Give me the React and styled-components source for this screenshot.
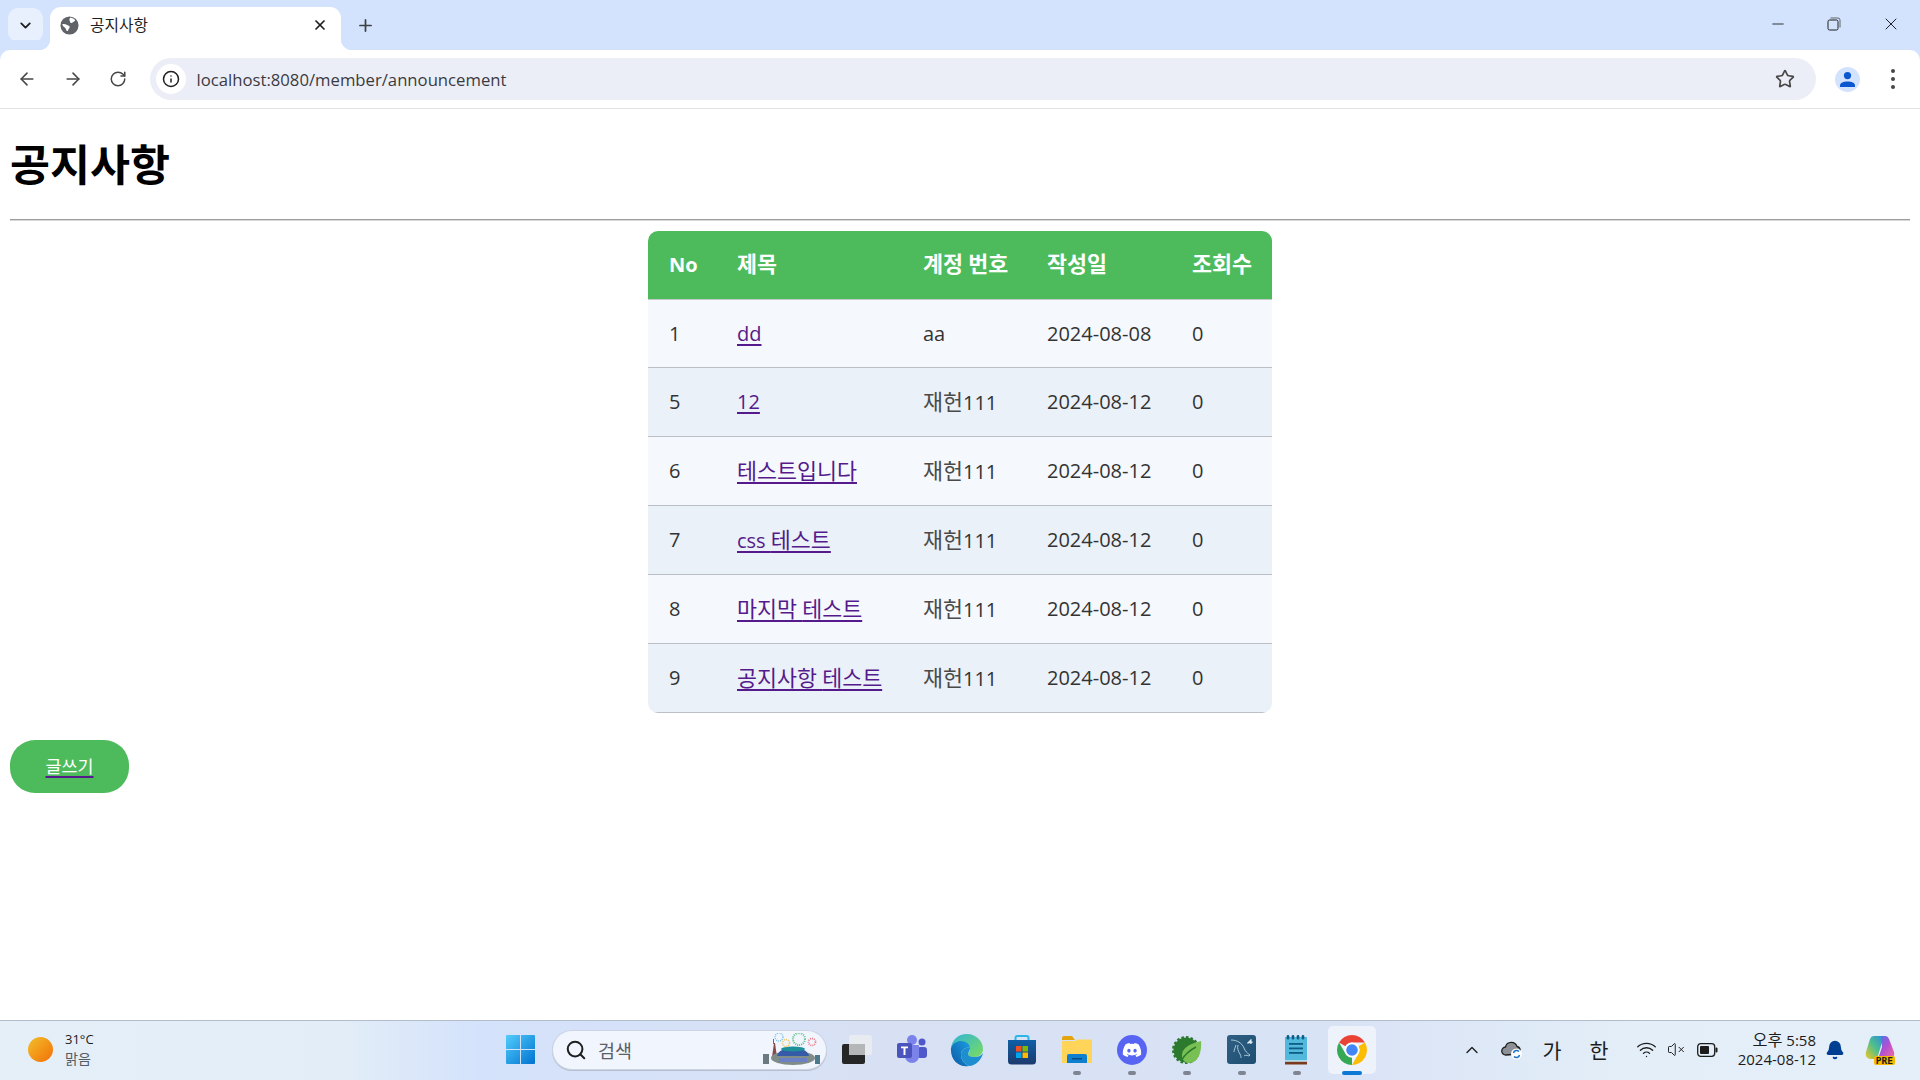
import React from 'react';
import styled, { createGlobalStyle } from 'styled-components';
import { ArrowLeft, ArrowRight, RotateCw, Info, Star, X, Plus, ChevronDown, Minus, Search, ChevronUp, Bell, Wifi, VolumeX } from 'lucide-react';
import { FaDiscord } from 'react-icons/fa';

const FONT = `"Open Sans", "Noto Sans CJK KR", sans-serif`;

const Global = createGlobalStyle`
  html, body { margin: 0; padding: 0; background: #fff; }
  body { font-family: ${FONT}; overflow: hidden; }
`;

const Shell = styled.div`
  display: flex;
  flex-direction: column;
  width: 1920px;
  height: 1080px;
  overflow: hidden;
`;

/* Hangul in the reference's font has a full-em advance, Noto's is .92em */
const Ko = styled.span`
  font-size: 1.087em;
`;

/* ---------- browser chrome ---------- */
const TabStrip = styled.div`
  display: flex;
  align-items: flex-end;
  height: 50px;
  flex: none;
  background: #d3e3fd;
  padding-left: 8px;
`;
const TabSearch = styled.button`
  display: flex;
  align-items: center;
  justify-content: center;
  width: 35px;
  height: 34px;
  margin: 0 7px 8px 0;
  padding: 0;
  border: 0;
  border-radius: 10px;
  background: #e8f0fe;
  color: #1f1f1f;
`;
const Tab = styled.div`
  position: relative;
  display: flex;
  align-items: center;
  width: 291px;
  height: 43px;
  box-sizing: border-box;
  padding: 0 13px 7px 10px;
  background: #fff;
  border-radius: 11px 11px 0 0;
  &::before, &::after {
    content: '';
    position: absolute;
    bottom: 0;
    width: 11px;
    height: 11px;
  }
  &::before { left: -11px; background: radial-gradient(circle at 0 0, transparent 11px, #fff 11.5px); }
  &::after { right: -11px; background: radial-gradient(circle at 100% 0, transparent 11px, #fff 11.5px); }
`;
const TabTitle = styled.span`
  flex: 1;
  margin-left: 11px;
  font-size: 14.5px;
  line-height: 20px;
  color: #1f1f1f;
`;
const NewTab = styled.div`
  display: flex;
  align-items: center;
  margin: 0 0 15px 15px;
  color: #3c4043;
`;
const WindowControls = styled.div`
  display: flex;
  margin: 0 0 16px auto;
  padding-right: 1px;
`;
const WindowButton = styled.div`
  display: flex;
  align-items: center;
  justify-content: center;
  width: 56.5px;
  height: 20px;
  color: #1f1f1f;
`;
const Toolbar = styled.div`
  display: flex;
  align-items: center;
  height: 59px;
  box-sizing: border-box;
  flex: none;
  background: #fff;
  border-bottom: 1px solid #e2e2e2;
  border-radius: 10px 10px 0 0;
  box-shadow: 0 -10px 0 #d3e3fd;
  padding: 0 25px 0 9px;
  color: #474747;
`;
const NavButton = styled.div`
  display: flex;
  align-items: center;
  justify-content: center;
  width: 36px;
  margin-right: 9.5px;
`;
const Omnibox = styled.div`
  display: flex;
  align-items: center;
  flex: 1;
  height: 42px;
  margin-left: 4px;
  padding: 0 21px 0 6px;
  border-radius: 21px;
  background: #ebeef7;
`;
const InfoChip = styled.div`
  display: flex;
  align-items: center;
  justify-content: center;
  width: 30px;
  height: 30px;
  border-radius: 50%;
  background: #fff;
  color: #1f1f1f;
`;
const UrlText = styled.span`
  flex: 1;
  margin-left: 11px;
  font-size: 16.7px;
  color: #3b3b3f;
`;
const Avatar = styled.div`
  display: flex;
  align-items: center;
  justify-content: center;
  width: 25px;
  height: 25px;
  margin-left: 19.5px;
  border-radius: 50%;
  background: #d3e3fd;
`;
const MenuDots = styled.div`
  display: flex;
  flex-direction: column;
  align-items: center;
  gap: 4px;
  margin-left: 31px;
  & > i { width: 4px; height: 4px; border-radius: 50%; background: #474747; display: block; }
`;

/* ---------- page ---------- */
const Page = styled.main`
  flex: 1;
  padding: 0 10px;
  background: #fff;
`;
const Title = styled.h1`
  height: 54px;
  margin: 29px 0 27px;
  font-size: 40px;
  line-height: 54px;
  font-weight: 700;
  color: #000;
`;
const Rule = styled.hr`
  height: 0;
  margin: 0 0 10px;
  border: 0;
  border-top: 1px solid #9d9d9d;
  border-bottom: 1px solid #d8d8d8;
`;
const TableWrap = styled.div`
  width: 624px;
  margin: 0 auto;
  border-radius: 10px;
  overflow: hidden;
`;
const Table = styled.table`
  width: 100%;
  table-layout: fixed;
  border-collapse: separate;
  border-spacing: 0;
  font-size: 20px;
`;
const Th = styled.th`
  height: 69px;
  padding: 0 0 2px 22px;
  box-sizing: border-box;
  text-align: left;
  font-weight: 700;
  line-height: 27px;
  color: #fff;
  background: #4dbb5c;
  border-bottom: 1px solid #c4cbc6;
  &:first-child { padding-left: 21px; }
`;
const Td = styled.td`
  height: 69px;
  padding: 0 0 1px 22px;
  box-sizing: border-box;
  line-height: 27px;
  color: #333;
  border-bottom: 1px solid #bcc0c6;
  &:first-child { padding-left: 21px; }
  & > ${Ko} { color: #4a4a4a; }
`;
const Tr = styled.tr`
  background: ${p => (p.$even ? '#eaf1f8' : '#f5f8fc')};
  &:first-child > ${Td} { height: 68px; }
`;
const PostLink = styled.a`
  color: #551a8b;
  text-decoration: underline;
  text-decoration-thickness: 2px;
  text-underline-offset: 3px;
`;
const WriteButton = styled.a`
  display: flex;
  align-items: center;
  justify-content: center;
  width: 119px;
  height: 53px;
  box-sizing: border-box;
  margin-top: 27px;
  padding-bottom: 2px;
  border-radius: 25px;
  background: #4dbb5c;
  font-size: 16px;
  font-weight: 400;
  color: #fff;
  text-decoration: underline #551a8b;
  text-decoration-thickness: 1.5px;
  text-underline-offset: 3px;
`;

/* ---------- taskbar ---------- */
const Taskbar = styled.footer`
  display: flex;
  align-items: center;
  height: 60px;
  box-sizing: border-box;
  flex: none;
  padding-bottom: 2px;
  border-top: 1px solid #b3bccb;
  background: linear-gradient(90deg, #e5eff8 0, #e2edf8 18%, #d4e2fb 25%, #d8e1f4 45%, #d9e3f6 70%, #e3eef8 85%, #e4eff9 100%);
`;
const Weather = styled.div`
  display: flex;
  align-items: center;
  flex: none;
  width: 506px;
  box-sizing: border-box;
  padding-left: 28px;
  gap: 12px;
`;
const Sun = styled.div`
  width: 25px;
  height: 25px;
  border-radius: 50%;
  background: linear-gradient(135deg, #f2c02c, #f36f06);
`;
const WeatherText = styled.div`
  display: flex;
  flex-direction: column;
  font-size: 13px;
  line-height: 19px;
  color: #1c1c1c;
  & > span + span { color: #555b62; }
`;
const SearchPill = styled.div`
  display: flex;
  align-items: center;
  flex: none;
  width: 273px;
  height: 38px;
  box-sizing: border-box;
  margin: 0 3px 0 18px;
  padding: 0 5px 0 12px;
  border-radius: 19px;
  background: #f1f5fd;
  box-shadow: 0 0 0 1px #cdd5e4, 0 1px 0 1px #b7bfce;
`;
const SearchText = styled.span`
  flex: 1;
  margin-left: 11px;
  font-size: 17px;
  color: #5b5f66;
`;
const AppSlot = styled.div`
  position: relative;
  display: flex;
  align-items: center;
  justify-content: center;
  flex: none;
  width: ${p => (p.$active ? '48px' : '55px')};
  height: 48px;
  margin: ${p => (p.$active ? '0 3.5px' : '0')};
  border-radius: 5px;
  background: ${p => (p.$active ? '#eef2fb' : 'transparent')};
  &::after {
    content: ${p => (p.$running ? "''" : 'none')};
    position: absolute;
    bottom: -1px;
    left: 50%;
    transform: translateX(-50%);
    width: ${p => (p.$active ? '20px' : '8px')};
    height: 4px;
    border-radius: 2px;
    background: ${p => (p.$active ? '#0a78d4' : '#7f8590')};
  }
`;
const Tray = styled.div`
  display: flex;
  align-items: center;
  margin-left: auto;
  padding-right: 14px;
  color: #1c1c1c;
`;
const TraySlot = styled.div`
  display: flex;
  align-items: center;
  justify-content: center;
  flex: none;
  width: ${p => p.$w}px;
  font-size: 19px;
`;
const Clock = styled.div`
  display: flex;
  flex-direction: column;
  align-items: flex-end;
  flex: none;
  width: 87px;
  font-size: 15px;
  line-height: 19px;
  white-space: nowrap;
`;
const CopilotBox = styled.div`
  position: relative;
  width: 30px;
  height: 30px;
`;
const PreBadge = styled.span`
  position: absolute;
  right: 0;
  bottom: 0;
  padding: 0 2px;
  border-radius: 2px;
  background: #f6b800;
  font-family: "DejaVu Sans Mono", monospace;
  font-size: 9.5px;
  font-weight: 700;
  line-height: 9px;
  color: #1c1c1c;
`;

/* ---------- drawings ---------- */
const GlobeIcon = () => (
  <svg width="19" height="19" viewBox="0 0 20 20">
    <circle cx="10" cy="10" r="9.5" fill="#5f6368" />
    <path d="M11 1.5c2 .4 4 1.4 5 3-.6 1.2-1.6 1.4-2.4 2.2-.7.8-1.8.9-2.6.3-.6-.5-.2-1.4-.8-2C9.700 4.400 9.600 2.600 11 1.500zM2.500 8.500c1.500-.3 3.300-.2 4.600.6 1.100.7 2.400 1 3 2 .4 1-.3 1.900-1 2.500-.5.700-.3 1.700-1.100 2.200-.6.300-1.300-.2-1.500-1-.4-1.100-.6-2.100-1.600-2.700-1.100-.7-2.200-1.600-2.400-3.600z" fill="#fff" />
  </svg>
);
const RestoreIcon = () => (
  <svg width="14" height="14" viewBox="0 0 14 14" fill="none" stroke="#1f1f1f" strokeWidth="1">
    <rect x="1" y="3" width="10" height="10" rx="1.600" />
    <path d="M3.500 1h7.500a2 2 0 0 1 2 2v7.500" stroke="#5f6368" />
  </svg>
);
const UserIcon = () => (
  <svg width="17" height="17" viewBox="0 0 17 17" fill="#0b57d0">
    <circle cx="8.500" cy="4.600" r="3.600" />
    <path d="M1 16v-1.500c0-2.600 3.500-4 7.500-4s7.500 1.400 7.500 4V16z" />
  </svg>
);
const WindowsIcon = () => (
  <svg width="29" height="29" viewBox="0 0 29 29" style={{ flex: 'none' }}>
    <defs>
      <linearGradient id="win" x1="0" y1="0" x2="1" y2="1">
        <stop offset="0" stopColor="#52cdfb" />
        <stop offset="1" stopColor="#0072d1" />
      </linearGradient>
    </defs>
    <path d="M1 0h13v14H0V1a1 1 0 0 1 1-1zM15 0h13a1 1 0 0 1 1 1v13H15zM0 15h14v14H1a1 1 0 0 1-1-1zM15 15h14v13a1 1 0 0 1-1 1H15z" fill="url(#win)" />
  </svg>
);
const SearchArt = () => (
  <svg width="58" height="34" viewBox="0 0 58 34" style={{ flex: 'none' }}>
    <rect x="0" y="21" width="6" height="10" fill="#6b7a80" />
    <rect x="52" y="22" width="5" height="9" fill="#4c7a8c" />
    <path d="M9 24l2-14h1l2 14z" fill="#8a4a4a" />
    <path d="M10.500 6v5" stroke="#b5523f" strokeWidth="1" />
    <ellipse cx="30" cy="25" rx="22" ry="7" fill="#7f8c88" />
    <path d="M14 23c1-6 9-8 16-8s15 2 16 8z" fill="#355aa8" />
    <path d="M16 25h28v4H16z" fill="#6a7fc4" />
    <ellipse cx="30" cy="16" rx="12" ry="2.500" fill="#1f8f9a" />
    <circle cx="16" cy="4" r="4" fill="none" stroke="#7cc0ea" strokeWidth="1.500" strokeDasharray="1 1" />
    <circle cx="23" cy="10" r="3.500" fill="none" stroke="#eec24e" strokeWidth="1.500" strokeDasharray="1 1" />
    <circle cx="36" cy="6" r="6" fill="none" stroke="#62c08d" strokeWidth="2" strokeDasharray="1 1" />
    <circle cx="49" cy="9" r="3.500" fill="none" stroke="#ec7d8b" strokeWidth="1.800" strokeDasharray="1 1" />
  </svg>
);
const TaskViewIcon = () => (
  <svg width="30" height="30" viewBox="0 0 30 30">
    <rect x="0" y="9" width="23" height="20" rx="2" fill="#262626" />
    <rect x="7" y="0" width="23" height="20" rx="2" fill="#e9ebee" opacity=".92" />
    <rect x="7" y="9" width="16" height="11" fill="#b5b6b8" />
  </svg>
);
const TeamsIcon = () => (
  <svg width="30" height="30" viewBox="0 0 30 30">
    <circle cx="25" cy="7" r="3.500" fill="#5059c9" />
    <rect x="20" y="12" width="10" height="11" rx="3" fill="#5059c9" />
    <circle cx="15" cy="5" r="5" fill="#7b83eb" />
    <path d="M8 10h14v11a7 7 0 0 1-14 0z" fill="#7b83eb" />
    <rect x="0" y="8" width="15" height="15" rx="2" fill="#4b53bc" />
    <path d="M4 11.500h7v1.800H8.500V20h-2v-6.700H4z" fill="#fff" />
  </svg>
);
const EdgeIcon = () => (
  <svg width="34" height="34" viewBox="0 0 34 34">
    <defs>
      <linearGradient id="edgeA" x1="0" y1="1" x2="1" y2="0">
        <stop offset="0" stopColor="#0c59a4" />
        <stop offset="1" stopColor="#1b9de2" />
      </linearGradient>
      <linearGradient id="edgeB" x1="0" y1="0" x2="1" y2="1">
        <stop offset="0" stopColor="#2fb5d8" />
        <stop offset="1" stopColor="#7bdc5e" />
      </linearGradient>
    </defs>
    <path d="M17 1C26 1 33 8 33 16c0 5-4 8-9 8-3 0-6-1-6-3 0-1 2-2 2-5 0-4-4-7-9-7-4 0-8 2-10 6C2 7 8 1 17 1z" fill="url(#edgeB)" />
    <path d="M1 15c2-5 6-7 10-7 5 0 9 3 9 7-4-1-9 1-9 7 0 5 4 9 8 11-10 2-19-6-18-18z" fill="url(#edgeA)" />
    <path d="M19 33c-4-2-8-6-8-11 0-6 5-8 9-7 0 3-2 4-2 6 0 2 3 3 6 3 4 0 7-1 9-4-1 6-7 13-14 13z" fill="#1d8fd0" />
  </svg>
);
const StoreIcon = () => (
  <svg width="30" height="30" viewBox="0 0 30 30">
    <defs>
      <linearGradient id="bag" x1="0" y1="0" x2="0" y2="1">
        <stop offset="0" stopColor="#0f5fa6" />
        <stop offset="1" stopColor="#1d3a6d" />
      </linearGradient>
    </defs>
    <path d="M8.500 7V3a2 2 0 0 1 2-2h9a2 2 0 0 1 2 2v4" fill="none" stroke="#29b6e8" strokeWidth="2" />
    <path d="M1 5h28v21a3.500 3.500 0 0 1-3.500 3.500h-21A3.500 3.500 0 0 1 1 26z" fill="url(#bag)" />
    <rect x="9" y="11" width="5.500" height="5.500" fill="#f25022" />
    <rect x="15.500" y="11" width="5.500" height="5.500" fill="#7fba00" />
    <rect x="9" y="17.500" width="5.500" height="5.500" fill="#00a4ef" />
    <rect x="15.500" y="17.500" width="5.500" height="5.500" fill="#ffb900" />
  </svg>
);
const FolderIcon = () => (
  <svg width="30" height="28" viewBox="0 0 30 28">
    <path d="M0 2a2 2 0 0 1 2-2h8l3 4h-13z" fill="#e3a50c" />
    <path d="M0 5h13l2-1.500h15V27H0z" fill="#ffd559" />
    <path d="M5 20a2 2 0 0 1 2-2h16a2 2 0 0 1 2 2v7H5z" fill="#0f7fd0" />
    <rect x="10" y="22" width="10" height="1.500" fill="#0a4d85" />
  </svg>
);
const DiscordDisc = styled.div`
  display: flex;
  align-items: center;
  justify-content: center;
  width: 30px;
  height: 30px;
  border-radius: 50%;
  background: #5865f2;
`;
const DiscordIcon = () => (
  <DiscordDisc><FaDiscord size={20} color="#fff" /></DiscordDisc>
);
const SpringIcon = () => (
  <svg width="30" height="30" viewBox="0 0 30 30">
    <circle cx="14" cy="15" r="12.500" fill="#2c7a2e" stroke="#2c7a2e" strokeWidth="3" strokeDasharray="2.500 2" />
    <path d="M10 22C9 14 16 9 29 6c1 9-2 22-12 22-3 0-6-2-7-6z" fill="#79c054" />
    <path d="M9 26c4-7 9-11 15-14" fill="none" stroke="#2c7a2e" strokeWidth="1.500" />
  </svg>
);
const MysqlIcon = () => (
  <svg width="29" height="29" viewBox="0 0 29 29">
    <defs>
      <linearGradient id="my" x1="0" y1="0" x2="1" y2="1">
        <stop offset="0" stopColor="#2f5f83" />
        <stop offset="1" stopColor="#1f4e73" />
      </linearGradient>
    </defs>
    <rect width="29" height="29" rx="3" fill="url(#my)" />
    <path d="M4 5c6 0 11 3 13 8 1 3 3 5 6 7l-1 1c-3-1-4-1-5 0M11 10c-1 3 0 6 2 9 1 2 1 3 1 4M9 10c-1 3-2 5-2 7" fill="none" stroke="#b8d2e2" strokeWidth=".9" />
    <path d="M20 8l4-4 1 1-1 1 2 1-2 2-2-1-1 1z" fill="#dfe9ef" />
  </svg>
);
const NotepadIcon = () => (
  <svg width="23" height="30" viewBox="0 0 23 30">
    <rect y="2" width="22" height="27" fill="#52b9dc" />
    <rect y="26.500" width="22" height="3" fill="#7b3a1d" />
    <rect y="25.500" width="22" height="1" fill="#fff" />
    {[3, 8, 13, 18].map(x => <rect key={x} x={x - 1.300} y="0" width="2.600" height="4.500" rx="1.300" fill="#0f5d85" />)}
    {[8, 12.500, 17].map(y => <rect key={y} x="4" y={y} width="14" height="1.800" fill="#0f5d85" />)}
  </svg>
);
const ChromeIcon = () => (
  <svg width="30" height="30" viewBox="2 2 44 44">
    <path d="M4.950 13A22 22 0 0 1 43.050 13H24A11 11 0 0 0 14.470 18.500z" fill="#ea4335" />
    <path d="M43.050 13A22 22 0 0 1 24 46L33.530 29.500A11 11 0 0 0 33.530 18.500z" fill="#fbbc04" />
    <path d="M24 46A22 22 0 0 1 4.950 13L14.470 29.500A11 11 0 0 0 24 35z" fill="#34a853" />
    <circle cx="24" cy="24" r="11" fill="#fff" />
    <circle cx="24" cy="24" r="8.500" fill="#4285f4" />
  </svg>
);
const CloudSyncIcon = () => (
  <svg width="22" height="20" viewBox="0 0 22 20">
    <path d="M5 15a4 4 0 0 1-.5-8A6 6 0 0 1 16 6.500 4 4 0 0 1 17 14z" fill="#8d9096" stroke="#1f1f1f" strokeWidth="1.300" />
    <circle cx="15.500" cy="14" r="5.500" fill="#fff" />
    <path d="M12.500 13a3.200 3.200 0 0 1 5.500-1.500M18.500 15a3.200 3.200 0 0 1-5.500 1.500" fill="none" stroke="#1a73c8" strokeWidth="1.500" />
  </svg>
);
const BatteryIcon = () => (
  <svg width="21" height="14" viewBox="0 0 21 14">
    <rect x=".7" y=".7" width="17" height="12.600" rx="3" fill="none" stroke="#1c1c1c" strokeWidth="1.300" />
    <rect x="3" y="3" width="9" height="8" rx="1" fill="#1c1c1c" />
    <rect x="18.500" y="4.500" width="2" height="5" rx="1" fill="#1c1c1c" />
  </svg>
);
const CopilotIcon = () => (
  <svg width="30" height="28" viewBox="0 0 30 28">
    <defs>
      <linearGradient id="coA" x1="0" y1="1" x2="1" y2="0">
        <stop offset="0" stopColor="#f0c820" />
        <stop offset=".5" stopColor="#4fbf8c" />
        <stop offset="1" stopColor="#2a8be0" />
      </linearGradient>
      <linearGradient id="coB" x1="0" y1="0" x2="1" y2="1">
        <stop offset="0" stopColor="#3b7df0" />
        <stop offset=".5" stopColor="#b54fd0" />
        <stop offset="1" stopColor="#f2709c" />
      </linearGradient>
    </defs>
    <path d="M9 1h10l-4 13-3 10H6c-4 0-6-3-5-7L5 4c1-2 2-3 4-3z" fill="url(#coA)" />
    <path d="M16 1h4c2 0 3 1 4 3l5 13c1 4-1 7-5 7H13l4-12z" fill="url(#coB)" />
  </svg>
);

/* ---------- data ---------- */
const rows = [
  { no: 1, title: <>dd</>, author: <>aa</>, date: '2024-08-08' },
  { no: 5, title: <>12</>, author: <><Ko>재헌</Ko>111</>, date: '2024-08-12' },
  { no: 6, title: <Ko>테스트입니다</Ko>, author: <><Ko>재헌</Ko>111</>, date: '2024-08-12' },
  { no: 7, title: <>css <Ko>테스트</Ko></>, author: <><Ko>재헌</Ko>111</>, date: '2024-08-12' },
  { no: 8, title: <><Ko>마지막</Ko> <Ko>테스트</Ko></>, author: <><Ko>재헌</Ko>111</>, date: '2024-08-12' },
  { no: 9, title: <><Ko>공지사항</Ko> <Ko>테스트</Ko></>, author: <><Ko>재헌</Ko>111</>, date: '2024-08-12' },
];
const colWidths = [67, 186, 124, 145, 102];
const apps = [
  { key: 'task', icon: <TaskViewIcon /> },
  { key: 'teams', icon: <TeamsIcon /> },
  { key: 'edge', icon: <EdgeIcon /> },
  { key: 'store', icon: <StoreIcon /> },
  { key: 'folder', icon: <FolderIcon />, running: true },
  { key: 'discord', icon: <DiscordIcon />, running: true },
  { key: 'spring', icon: <SpringIcon />, running: true },
  { key: 'mysql', icon: <MysqlIcon />, running: true },
  { key: 'notepad', icon: <NotepadIcon />, running: true },
  { key: 'chrome', icon: <ChromeIcon />, running: true, active: true },
];

export default function App() {
  return (
    <Shell>
      <Global />
      <TabStrip>
        <TabSearch><ChevronDown size={17} strokeWidth={2.6} /></TabSearch>
        <Tab>
          <GlobeIcon />
          <TabTitle><Ko>공지사항</Ko></TabTitle>
          <X size={16} strokeWidth={2.6} color="#1f1f1f" />
        </Tab>
        <NewTab><Plus size={19} strokeWidth={2.2} /></NewTab>
        <WindowControls>
          <WindowButton><Minus size={18} strokeWidth={1.2} /></WindowButton>
          <WindowButton><RestoreIcon /></WindowButton>
          <WindowButton><X size={20} strokeWidth={1.2} /></WindowButton>
        </WindowControls>
      </TabStrip>
      <Toolbar>
        <NavButton><ArrowLeft size={20} strokeWidth={1.9} /></NavButton>
        <NavButton><ArrowRight size={20} strokeWidth={1.9} /></NavButton>
        <NavButton><RotateCw size={18} strokeWidth={2} /></NavButton>
        <Omnibox>
          <InfoChip><Info size={18} strokeWidth={2} /></InfoChip>
          <UrlText>localhost:8080/member/announcement</UrlText>
          <Star size={20} strokeWidth={2} color="#474747" />
        </Omnibox>
        <Avatar><UserIcon /></Avatar>
        <MenuDots><i /><i /><i /></MenuDots>
      </Toolbar>
      <Page>
        <Title><Ko>공지사항</Ko></Title>
        <Rule />
        <TableWrap>
          <Table>
            <colgroup>
              {colWidths.map(w => <col key={w} width={w} />)}
            </colgroup>
            <thead>
              <tr>
                <Th>No</Th>
                <Th><Ko>제목</Ko></Th>
                <Th><Ko>계정</Ko> <Ko>번호</Ko></Th>
                <Th><Ko>작성일</Ko></Th>
                <Th><Ko>조회수</Ko></Th>
              </tr>
            </thead>
            <tbody>
              {rows.map((r, i) => (
                <Tr key={r.no} $even={i % 2 === 1}>
                  <Td>{r.no}</Td>
                  <Td><PostLink href="#">{r.title}</PostLink></Td>
                  <Td>{r.author}</Td>
                  <Td>{r.date}</Td>
                  <Td>0</Td>
                </Tr>
              ))}
            </tbody>
          </Table>
        </TableWrap>
        <WriteButton href="#"><Ko>글쓰기</Ko></WriteButton>
      </Page>
      <Taskbar>
        <Weather>
          <Sun />
          <WeatherText>
            <span>31°C</span>
            <span><Ko>맑음</Ko></span>
          </WeatherText>
        </Weather>
        <WindowsIcon />
        <SearchPill>
          <Search size={22} strokeWidth={2.2} color="#1f1f1f" />
          <SearchText><Ko>검색</Ko></SearchText>
          <SearchArt />
        </SearchPill>
        {apps.map(a => (
          <AppSlot key={a.key} $running={a.running} $active={a.active}>{a.icon}</AppSlot>
        ))}
        <Tray>
          <TraySlot $w={40}><ChevronUp size={20} strokeWidth={1.6} /></TraySlot>
          <TraySlot $w={40}><CloudSyncIcon /></TraySlot>
          <TraySlot $w={40}><Ko>가</Ko></TraySlot>
          <TraySlot $w={54}><Ko>한</Ko></TraySlot>
          <TraySlot $w={41}><Wifi size={21} strokeWidth={1.5} /></TraySlot>
          <TraySlot $w={18}><VolumeX size={19} strokeWidth={1.3} /></TraySlot>
          <TraySlot $w={44}><BatteryIcon /></TraySlot>
          <Clock>
            <span><Ko>오후</Ko> 5:58</span>
            <span>2024-08-12</span>
          </Clock>
          <TraySlot $w={38}><Bell size={20} fill="#003e92" color="#003e92" /></TraySlot>
          <TraySlot $w={52}>
            <CopilotBox>
              <CopilotIcon />
              <PreBadge>PRE</PreBadge>
            </CopilotBox>
          </TraySlot>
        </Tray>
      </Taskbar>
    </Shell>
  );
}
